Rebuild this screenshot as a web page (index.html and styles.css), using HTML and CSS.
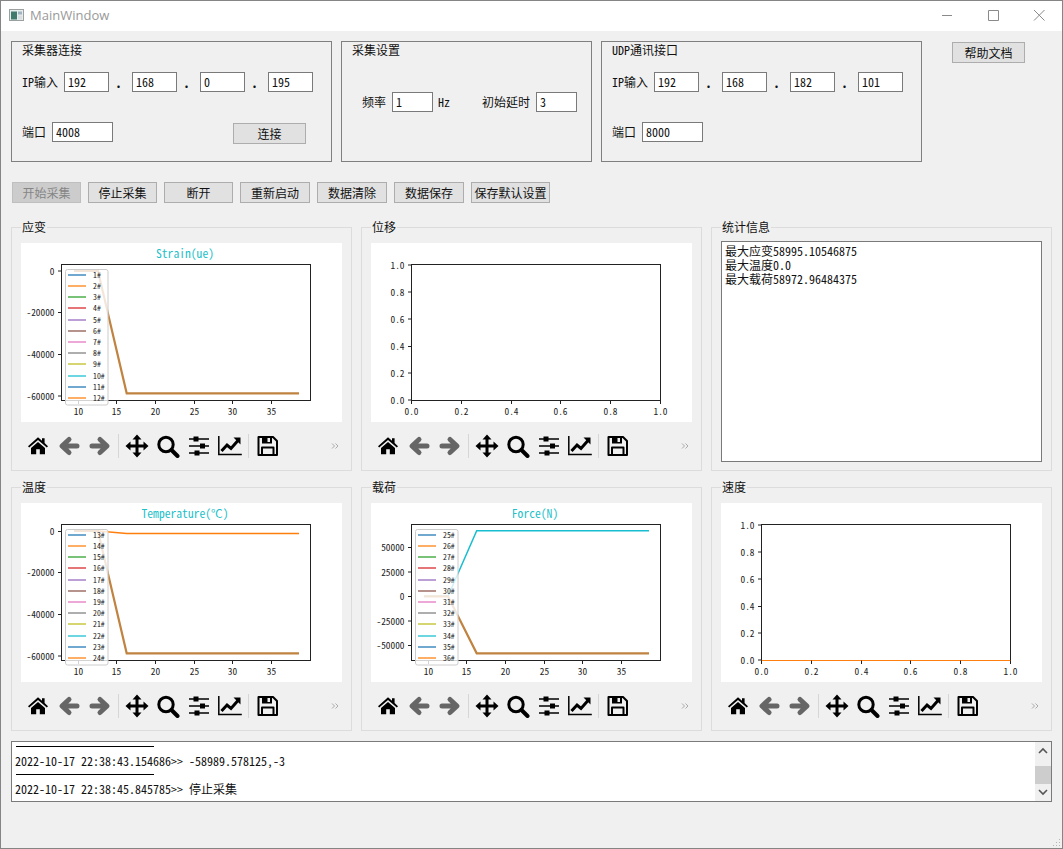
FILE: index.html
```html
<!DOCTYPE html>
<html lang="zh">
<head>
<meta charset="utf-8">
<title>MainWindow</title>
<link rel="stylesheet" href="styles.css">
</head>
<body>
<svg class="defs" xmlns="http://www.w3.org/2000/svg">
  <symbol id="i-home" viewBox="0 0 24 24"><path d="M2 12.2 12 3.2l4 3.5V4.2h2.6v4.9l3.4 3.1-1.2 1.3L12 5.9l-8.8 7.6z"/><path d="M5 14 12 8l7 6v6.2h-5.2v-5h-3.600v5H5z"/></symbol>
  <symbol id="i-back" viewBox="0 0 24 24"><path class="gray-arrow" d="M20 12H6M12 5.5 5 12l7 6.500"/></symbol>
  <symbol id="i-forward" viewBox="0 0 24 24"><path class="gray-arrow" d="M4 12H18M12 5.5 19 12l-7 6.500"/></symbol>
  <symbol id="i-move" viewBox="0 0 24 24"><path d="M12 .5l4.5 5h-3v5h5v-3l5 4.5-5 4.5v-3h-5v5h3L12 23.5l-4.5-5h3v-5h-5v3L.5 12l5-4.5v3h5v-5h-3z"/></symbol>
  <symbol id="i-zoom" viewBox="0 0 24 24"><circle class="stroke3" cx="10" cy="10.5" r="7.200"/><path class="stroke4" d="M15.5 16 21.5 22"/></symbol>
  <symbol id="i-sliders" viewBox="0 0 24 24"><path class="stroke1" d="M2 5h20M2 12h20M2 19h20"/><path d="M6.5 2.500h5v5h-5zM13 9.500h5v5h-5zM7.500 16.500h5v5h-5z"/></symbol>
  <symbol id="i-chart" viewBox="0 0 24 24"><path class="stroke1" d="M.8 2v18.500h23"/><path class="stroke3" d="M3.500 17 9 11l4 3.500 7-8"/><path d="M15.500 3.500h7v7z"/></symbol>
  <symbol id="i-save" viewBox="0 0 24 24"><path class="stroke2" d="M2.500 3h14.500l4 4v14H2.500z"/><path d="M6 3h10v6.500H6z"/><path class="white" d="M11.500 4h2.500v4h-2.500z"/><path class="stroke2" d="M6 21v-7.500h11.500V21"/></symbol>
  <symbol id="legend" viewBox="0 0 321 179">
    <rect class="legend-box" x="44.5" y="26.5" width="42.5" height="135.5" rx="2"/>
    <path class="ln c1" d="M47 32h18"/><path class="ln c2" d="M47 43h18"/><path class="ln c3" d="M47 54h18"/><path class="ln c4" d="M47 65h18"/><path class="ln c5" d="M47 77h18"/><path class="ln c6" d="M47 88h18"/><path class="ln c7" d="M47 99h18"/><path class="ln c8" d="M47 110h18"/><path class="ln c9" d="M47 121h18"/><path class="ln c10" d="M47 133h18"/><path class="ln c1" d="M47 144h18"/><path class="ln c2" d="M47 155h18"/>
  </symbol>
  <symbol id="x-ticks" viewBox="0 0 321 179"><path class="tick" d="M57.5 157.5v3.500M95.5 157.5v3.500M134.5 157.5v3.500M173.5 157.5v3.500M211.5 157.5v3.500M250.5 157.5v3.500"/></symbol>
  <symbol id="unit-ticks" viewBox="0 0 321 179"><path class="tick" d="M40.5 157.5v3.500M90.5 157.5v3.500M140.5 157.5v3.500M189.5 157.5v3.500M239.5 157.5v3.500M289.5 157.5v3.500M40.5 22h-3.500M40.5 49h-3.500M40.5 76h-3.500M40.5 103.500h-3.500M40.5 130h-3.500M40.5 157h-3.500"/></symbol>
</svg>

<div class="window">
  <header class="titlebar">
    <svg class="app-icon" viewBox="0 0 15 12"><rect class="app-frame" x=".5" y=".5" width="14" height="11"/><rect class="app-left" x="2" y="2.5" width="6" height="8"/><rect class="app-right" x="9" y="2.5" width="4" height="3"/><rect class="app-right2" x="9" y="6.5" width="4" height="4"/></svg>
    <span class="app-title">MainWindow</span>
    <div class="win-controls">
      <svg class="win-btn" viewBox="0 0 46 20"><path d="M18 10.5h10"/></svg>
      <svg class="win-btn" viewBox="0 0 46 20"><path d="M18.5 5.5h10v10h-10z"/></svg>
      <svg class="win-btn" viewBox="0 0 46 20"><path d="M18 5l10.500 10.500M28.500 5 18 15.500"/></svg>
    </div>
  </header>

  <main class="content">
    <section class="top-row">
      <div class="box box-wide">
        <div class="box-title">采集器连接</div>
        <div class="field-row row-ip">
          <label class="lbl lbl-ip">IP输入</label>
          <input class="inp inp-ip" value="192"><span class="dot">.</span>
          <input class="inp inp-ip" value="168"><span class="dot">.</span>
          <input class="inp inp-ip" value="0"><span class="dot">.</span>
          <input class="inp inp-ip" value="195">
        </div>
        <div class="field-row row-port">
          <label class="lbl lbl-port">端口</label>
          <input class="inp inp-port" value="4008">
          <button class="btn btn-connect">连接</button>
        </div>
      </div>

      <div class="box box-mid">
        <div class="box-title">采集设置</div>
        <div class="field-row row-rate">
          <label class="lbl lbl-rate">频率</label>
          <input class="inp inp-short" value="1">
          <span class="lbl lbl-hz">Hz</span>
          <label class="lbl lbl-delay">初始延时</label>
          <input class="inp inp-short" value="3">
        </div>
      </div>

      <div class="box box-wide">
        <div class="box-title">UDP通讯接口</div>
        <div class="field-row row-ip">
          <label class="lbl lbl-ip">IP输入</label>
          <input class="inp inp-ip" value="192"><span class="dot">.</span>
          <input class="inp inp-ip" value="168"><span class="dot">.</span>
          <input class="inp inp-ip" value="182"><span class="dot">.</span>
          <input class="inp inp-ip" value="101">
        </div>
        <div class="field-row row-port">
          <label class="lbl lbl-port">端口</label>
          <input class="inp inp-port" value="8000">
        </div>
      </div>

      <button class="btn btn-help">帮助文档</button>
    </section>

    <section class="action-row">
      <button class="btn act act-s btn-disabled">开始采集</button>
      <button class="btn act act-s">停止采集</button>
      <button class="btn act act-s">断开</button>
      <button class="btn act act-m">重新启动</button>
      <button class="btn act act-m">数据清除</button>
      <button class="btn act act-m">数据保存</button>
      <button class="btn act act-l">保存默认设置</button>
    </section>

    <section class="plots">
      <article class="panel">
        <h2 class="panel-title">应变</h2>
        <svg class="canvas" viewBox="0 0 321 179">
          <text class="plot-title" x="164" y="15">Strain(ue)</text>
          <rect class="axes" x="40.5" y="21.5" width="249" height="136"/>
          <path class="data data-main" d="M53 28H77L105.7 150.3H278"/>
          <use href="#x-ticks"/>
          <path class="tick" d="M40.5 28h-3.500M40.5 69.5h-3.500M40.5 111.5h-3.500M40.5 153h-3.500"/>
          <g class="tl-y"><text x="33.5" y="31.5">0</text><text x="33.5" y="73">-20000</text><text x="33.5" y="115">-40000</text><text x="33.5" y="156.5">-60000</text></g>
          <g class="tl-x"><text x="57.5" y="171.5">10</text><text x="95.5" y="171.5">15</text><text x="134.5" y="171.5">20</text><text x="173.5" y="171.5">25</text><text x="211.5" y="171.5">30</text><text x="250.5" y="171.5">35</text></g>
          <use href="#legend"/>
          <g class="lg"><text x="72" y="34.5">1#</text><text x="72" y="45.5">2#</text><text x="72" y="56.5">3#</text><text x="72" y="67.5">4#</text><text x="72" y="79.5">5#</text><text x="72" y="90.5">6#</text><text x="72" y="101.5">7#</text><text x="72" y="112.5">8#</text><text x="72" y="123.5">9#</text><text x="72" y="135.5">10#</text><text x="72" y="146.5">11#</text><text x="72" y="157.5">12#</text></g>
        </svg>
        <div class="toolbar"><svg class="tool"><use href="#i-home"/></svg><svg class="tool"><use href="#i-back"/></svg><svg class="tool"><use href="#i-forward"/></svg><span class="sep sep-a"></span><svg class="tool"><use href="#i-move"/></svg><svg class="tool"><use href="#i-zoom"/></svg><svg class="tool"><use href="#i-sliders"/></svg><svg class="tool"><use href="#i-chart"/></svg><span class="sep sep-b"></span><svg class="tool"><use href="#i-save"/></svg><svg class="more" viewBox="0 0 8 8"><path d="M1 1.5 3.5 4 1 6.5M4.5 1.5 7 4 4.5 6.5"/></svg></div>
      </article>

      <article class="panel">
        <h2 class="panel-title">位移</h2>
        <svg class="canvas" viewBox="0 0 321 179">
          <rect class="axes" x="40.5" y="21.5" width="249" height="136"/>
          <use href="#unit-ticks"/>
          <g class="tl-y"><text x="33.5" y="25.5">1.0</text><text x="33.5" y="52.5">0.8</text><text x="33.5" y="79.5">0.6</text><text x="33.5" y="107">0.4</text><text x="33.5" y="133.5">0.2</text><text x="33.5" y="160.5">0.0</text></g>
          <g class="tl-x"><text x="40.5" y="171.5">0.0</text><text x="90.5" y="171.5">0.2</text><text x="140.5" y="171.5">0.4</text><text x="189.5" y="171.5">0.6</text><text x="239.5" y="171.5">0.8</text><text x="289.5" y="171.5">1.0</text></g>
        </svg>
        <div class="toolbar"><svg class="tool"><use href="#i-home"/></svg><svg class="tool"><use href="#i-back"/></svg><svg class="tool"><use href="#i-forward"/></svg><span class="sep sep-a"></span><svg class="tool"><use href="#i-move"/></svg><svg class="tool"><use href="#i-zoom"/></svg><svg class="tool"><use href="#i-sliders"/></svg><svg class="tool"><use href="#i-chart"/></svg><span class="sep sep-b"></span><svg class="tool"><use href="#i-save"/></svg><svg class="more" viewBox="0 0 8 8"><path d="M1 1.5 3.5 4 1 6.5M4.5 1.5 7 4 4.5 6.5"/></svg></div>
      </article>

      <article class="panel panel-stats">
        <h2 class="panel-title">统计信息</h2>
        <div class="stats">
          <div>最大应变58995.10546875</div>
          <div>最大温度0.0</div>
          <div>最大载荷58972.96484375</div>
        </div>
      </article>

      <article class="panel">
        <h2 class="panel-title">温度</h2>
        <svg class="canvas" viewBox="0 0 321 179">
          <text class="plot-title" x="164" y="15">Temperature(℃)</text>
          <rect class="axes" x="40.5" y="21.5" width="249" height="136"/>
          <path class="data data-orange" d="M53 28H77L105.7 30.5H278"/>
          <path class="data data-main" d="M53 28H77L105.7 150.3H278"/>
          <use href="#x-ticks"/>
          <path class="tick" d="M40.5 28.5h-3.500M40.5 69.5h-3.500M40.5 111.5h-3.500M40.5 153h-3.500"/>
          <g class="tl-y"><text x="33.5" y="31.5">0</text><text x="33.5" y="73">-20000</text><text x="33.5" y="115">-40000</text><text x="33.5" y="156.5">-60000</text></g>
          <g class="tl-x"><text x="57.5" y="171.5">10</text><text x="95.5" y="171.5">15</text><text x="134.5" y="171.5">20</text><text x="173.5" y="171.5">25</text><text x="211.5" y="171.5">30</text><text x="250.5" y="171.5">35</text></g>
          <use href="#legend"/>
          <g class="lg"><text x="72" y="34.5">13#</text><text x="72" y="45.5">14#</text><text x="72" y="56.5">15#</text><text x="72" y="67.5">16#</text><text x="72" y="79.5">17#</text><text x="72" y="90.5">18#</text><text x="72" y="101.5">19#</text><text x="72" y="112.5">20#</text><text x="72" y="123.5">21#</text><text x="72" y="135.5">22#</text><text x="72" y="146.5">23#</text><text x="72" y="157.5">24#</text></g>
        </svg>
        <div class="toolbar"><svg class="tool"><use href="#i-home"/></svg><svg class="tool"><use href="#i-back"/></svg><svg class="tool"><use href="#i-forward"/></svg><span class="sep sep-a"></span><svg class="tool"><use href="#i-move"/></svg><svg class="tool"><use href="#i-zoom"/></svg><svg class="tool"><use href="#i-sliders"/></svg><svg class="tool"><use href="#i-chart"/></svg><span class="sep sep-b"></span><svg class="tool"><use href="#i-save"/></svg><svg class="more" viewBox="0 0 8 8"><path d="M1 1.5 3.5 4 1 6.5M4.5 1.5 7 4 4.5 6.5"/></svg></div>
      </article>

      <article class="panel">
        <h2 class="panel-title">载荷</h2>
        <svg class="canvas" viewBox="0 0 321 179">
          <text class="plot-title" x="164" y="15">Force(N)</text>
          <rect class="axes" x="40.5" y="21.5" width="249" height="136"/>
          <path class="data data-cyan" d="M53 93.3H77L105.7 27.7H278"/>
          <path class="data data-main" d="M53 93.3H77L105.7 150.3H278"/>
          <use href="#x-ticks"/>
          <path class="tick" d="M40.5 44.5h-3.500M40.5 69h-3.500M40.5 93.5h-3.500M40.5 118h-3.500M40.5 142.5h-3.500"/>
          <g class="tl-y"><text x="33.5" y="48">50000</text><text x="33.5" y="72.5">25000</text><text x="33.5" y="97">0</text><text x="33.5" y="121.5">-25000</text><text x="33.5" y="146">-50000</text></g>
          <g class="tl-x"><text x="57.5" y="171.5">10</text><text x="95.5" y="171.5">15</text><text x="134.5" y="171.5">20</text><text x="173.5" y="171.5">25</text><text x="211.5" y="171.5">30</text><text x="250.5" y="171.5">35</text></g>
          <use href="#legend"/>
          <g class="lg"><text x="72" y="34.5">25#</text><text x="72" y="45.5">26#</text><text x="72" y="56.5">27#</text><text x="72" y="67.5">28#</text><text x="72" y="79.5">29#</text><text x="72" y="90.5">30#</text><text x="72" y="101.5">31#</text><text x="72" y="112.5">32#</text><text x="72" y="123.5">33#</text><text x="72" y="135.5">34#</text><text x="72" y="146.5">35#</text><text x="72" y="157.5">36#</text></g>
        </svg>
        <div class="toolbar"><svg class="tool"><use href="#i-home"/></svg><svg class="tool"><use href="#i-back"/></svg><svg class="tool"><use href="#i-forward"/></svg><span class="sep sep-a"></span><svg class="tool"><use href="#i-move"/></svg><svg class="tool"><use href="#i-zoom"/></svg><svg class="tool"><use href="#i-sliders"/></svg><svg class="tool"><use href="#i-chart"/></svg><span class="sep sep-b"></span><svg class="tool"><use href="#i-save"/></svg><svg class="more" viewBox="0 0 8 8"><path d="M1 1.5 3.5 4 1 6.5M4.5 1.5 7 4 4.5 6.5"/></svg></div>
      </article>

      <article class="panel">
        <h2 class="panel-title">速度</h2>
        <svg class="canvas" viewBox="0 0 321 179">
          <rect class="axes" x="40.5" y="21.5" width="249" height="136"/>
          <path class="data data-speed" d="M40.5 157.5H289.5"/>
          <use href="#unit-ticks"/>
          <g class="tl-y"><text x="33.5" y="25.5">1.0</text><text x="33.5" y="52.5">0.8</text><text x="33.5" y="79.5">0.6</text><text x="33.5" y="107">0.4</text><text x="33.5" y="133.5">0.2</text><text x="33.5" y="160.5">0.0</text></g>
          <g class="tl-x"><text x="40.5" y="171.5">0.0</text><text x="90.5" y="171.5">0.2</text><text x="140.5" y="171.5">0.4</text><text x="189.5" y="171.5">0.6</text><text x="239.5" y="171.5">0.8</text><text x="289.5" y="171.5">1.0</text></g>
        </svg>
        <div class="toolbar"><svg class="tool"><use href="#i-home"/></svg><svg class="tool"><use href="#i-back"/></svg><svg class="tool"><use href="#i-forward"/></svg><span class="sep sep-a"></span><svg class="tool"><use href="#i-move"/></svg><svg class="tool"><use href="#i-zoom"/></svg><svg class="tool"><use href="#i-sliders"/></svg><svg class="tool"><use href="#i-chart"/></svg><span class="sep sep-b"></span><svg class="tool"><use href="#i-save"/></svg><svg class="more" viewBox="0 0 8 8"><path d="M1 1.5 3.5 4 1 6.5M4.5 1.5 7 4 4.5 6.5"/></svg></div>
      </article>
    </section>

    <section class="log">
      <div class="log-body">
        <hr class="log-rule">
        <div class="log-line">2022-10-17 22:38:43.154686&gt;&gt; -58989.578125,-3</div>
        <hr class="log-rule">
        <div class="log-line">2022-10-17 22:38:45.845785&gt;&gt; 停止采集</div>
      </div>
      <div class="scrollbar">
        <svg class="sb-arrow" viewBox="0 0 16 17"><path d="M4 11l4-4 4 4"/></svg>
        <div class="sb-track"><div class="sb-thumb"></div></div>
        <svg class="sb-arrow" viewBox="0 0 16 17"><path d="M4 6l4 4 4-4"/></svg>
      </div>
    </section>
  </main>
  <svg class="grip" viewBox="0 0 10 10"><path d="M8 1h1v1H8zM5 4h1v1H5zM8 4h1v1H8zM2 7h1v1H2zM5 7h1v1H5zM8 7h1v1H8z"/></svg>
</div>
</body>
</html>
```

FILE: styles.css
```css
* { box-sizing: border-box; }

html, body { margin: 0; height: 100%; }

body {
  font-family: "Noto Sans Mono CJK SC", "Liberation Mono", "Noto Sans CJK SC", monospace;
  font-size: 12px;
  line-height: 12px;
  color: #111;
  background: #f0f0f0;
  overflow: hidden;
}

.defs { display: none; }

.window {
  position: relative;
  width: 1063px;
  height: 849px;
  background: #f0f0f0;
  border: 1px solid #858585;
  overflow: hidden;
}

/* Title bar */
.titlebar {
  display: flex;
  align-items: center;
  height: 30px;
  padding: 0 0 2px 8px;
  background: #fff;
}
.app-icon { width: 15px; height: 12px; }
.app-frame { fill: #e8ecec; stroke: #9aa0a0; }
.app-left { fill: #3f7a6c; }
.app-right { fill: #9fb4c0; }
.app-right2 { fill: #d8dde0; }
.app-title {
  margin-left: 6px;
  font-family: "Open Sans", "Liberation Sans", sans-serif;
  font-size: 13px;
  color: #999;
}
.win-controls { display: flex; margin-left: auto; }
.win-btn { width: 46px; height: 20px; }
.win-btn path { fill: none; stroke: #8a8a8a; stroke-width: 1; }

/* Content */
.content { padding: 10px 10px 0; }

.top-row { display: flex; gap: 9px; align-items: flex-start; }

.box {
  height: 121px;
  border: 1px solid #808080;
  padding: 2px 0 0 10px;
}
.box-wide { width: 321px; }
.box-mid { width: 251px; }
.box-title { height: 12px; }

.field-row { display: flex; align-items: center; }
.row-ip { margin-top: 16px; }
.row-port { margin-top: 30px; align-items: flex-start; }
.row-rate { margin-top: 36px; padding-left: 10px; }

.lbl { white-space: nowrap; line-height: 20px; }
.lbl-ip { width: 42px; }
.lbl-port { width: 30px; }
.lbl-rate { width: 30px; }
.lbl-hz { width: 44px; margin-left: 5px; }
.lbl-delay { width: 54px; }

.inp {
  height: 20px;
  padding: 0 3px 2px;
  border: 1px solid #7a7a7a;
  border-radius: 0;
  background: #fff;
  color: #111;
  font: inherit;
  outline: none;
}
.inp-ip { width: 45px; }
.inp-port { width: 61px; }
.inp-short { width: 41px; }

.dot {
  width: 23px;
  padding-right: 4px;
  align-self: flex-end;
  margin-bottom: 3px;
  text-align: center;
  font-weight: 700;
  font-size: 13px;
  line-height: 12px;
}

.btn {
  height: 21px;
  padding: 0;
  border: 1px solid #adadad;
  border-radius: 0;
  background: #e1e1e1;
  color: #111;
  font: inherit;
}
.btn-connect { width: 73px; margin: 1px 0 0 120px; }
.btn-help { width: 73px; margin: 1px 0 0 21px; }

.action-row { display: flex; gap: 7px; margin: 20px 0 0 1px; }
.act-s { width: 69px; }
.act-m { width: 70px; }
.act-l { width: 79px; }
.btn-disabled { background: #ccc; border-color: #bfbfbf; color: #858585; }

/* Panels */
.plots {
  display: grid;
  grid-template-columns: repeat(3, 341px);
  grid-auto-rows: 244px;
  column-gap: 9px;
  row-gap: 16px;
  margin-top: 24px;
}
.panel {
  position: relative;
  border: 1px solid #dcdcdc;
  padding: 15px 9px 0;
}
.panel-stats { padding-top: 13px; }
.panel-title {
  position: absolute;
  top: -7px;
  left: 9px;
  margin: 0;
  padding: 0 1px;
  background: #f0f0f0;
  font: inherit;
}

.canvas { display: block; width: 321px; height: 179px; background: #fff; }

.axes { fill: none; stroke: #222; stroke-width: 1; }
.tick { fill: none; stroke: #222; stroke-width: 1; }
.plot-title {
  font-family: "Noto Sans Mono CJK SC", "Liberation Mono", monospace;
  font-size: 11.6px;
  fill: #22bfc9;
  text-anchor: middle;
}
.tl-x text, .tl-y text {
  font-family: "Noto Sans Mono CJK SC", "Liberation Sans", sans-serif;
  font-size: 9.33px;
  fill: #222;
}
.tl-x text { text-anchor: middle; }
.tl-y text { text-anchor: end; }

.data { fill: none; stroke-width: 1.5; }
.data-main { stroke: #c08340; stroke-width: 2.2; }
.data-orange { stroke: #ff7f0e; }
.data-cyan { stroke: #17becf; }
.data-speed { stroke: #ff7f0e; stroke-width: 1; }

.legend-box { fill: #fff; fill-opacity: .8; stroke: #ccc; stroke-width: 1; }
.ln { fill: none; stroke-width: 1.5; stroke-opacity: .85; }
.c1 { stroke: #1f77b4; }
.c2 { stroke: #ff7f0e; }
.c3 { stroke: #2ca02c; }
.c4 { stroke: #d62728; }
.c5 { stroke: #9467bd; }
.c6 { stroke: #8c564b; }
.c7 { stroke: #e377c2; }
.c8 { stroke: #7f7f7f; }
.c9 { stroke: #bcbd22; }
.c10 { stroke: #17becf; }
.lg text {
  font-family: "Noto Sans Mono CJK SC", "Liberation Sans", sans-serif;
  font-size: 7.8px;
  fill: #222;
}

/* Toolbar */
.toolbar {
  display: flex;
  align-items: center;
  height: 24px;
  margin: 12px 0 0 1px;
}
.tool {
  flex: none;
  width: 24px;
  height: 24px;
  margin: 0 3.5px;
  fill: #000;
}
.gray-arrow { fill: none; stroke: #666; stroke-width: 5; stroke-linejoin: round; stroke-linecap: round; }
.stroke1, .stroke2, .stroke3, .stroke4 { fill: none; stroke: #000; }
.stroke1 { stroke-width: 1.5; }
.stroke2 { stroke-width: 2; stroke-linejoin: round; }
.stroke3 { stroke-width: 3; }
.stroke4 { stroke-width: 4; stroke-linecap: round; }
.white { fill: #f0f0f0; }

.sep { flex: none; width: 1px; height: 24px; background: #d6d6d6; }
.sep-a { margin: 0 2px 0 3px; }
.sep-b { margin: 0 3px 0 3px; }
.more { width: 8px; height: 8px; margin-left: auto; margin-right: 3px; }
.more path { fill: none; stroke: #aaa; stroke-width: 1; }

/* Stats */
.stats {
  width: 321px;
  height: 221px;
  padding: 2px 3px;
  border: 1px solid #7a7a7a;
  background: #fff;
  line-height: 14px;
}

/* Log */
.log {
  display: flex;
  width: 1041px;
  height: 61px;
  margin-top: 10px;
  border: 1px solid #7a7a7a;
  background: #fff;
}
.log-body { flex: 1; padding: 4px 0 0 3px; line-height: 14px; }
.log-rule {
  width: 138px;
  height: 1px;
  margin: 0 0 7px 1px;
  border: 0;
  background: #000;
}
.log-line { margin-bottom: 6px; white-space: pre; }

.scrollbar {
  display: flex;
  flex-direction: column;
  width: 16px;
  background: #f0f0f0;
}
.sb-arrow { flex: none; width: 16px; height: 17px; }
.sb-arrow path { fill: none; stroke: #555; stroke-width: 1.6; }
.sb-track { flex: 1; }
.sb-thumb { height: 18px; margin-top: 7px; background: #cdcdcd; }

.grip {
  position: absolute;
  right: 1px;
  bottom: 0;
  width: 10px;
  height: 10px;
  fill: #b5b5b5;
}
```
